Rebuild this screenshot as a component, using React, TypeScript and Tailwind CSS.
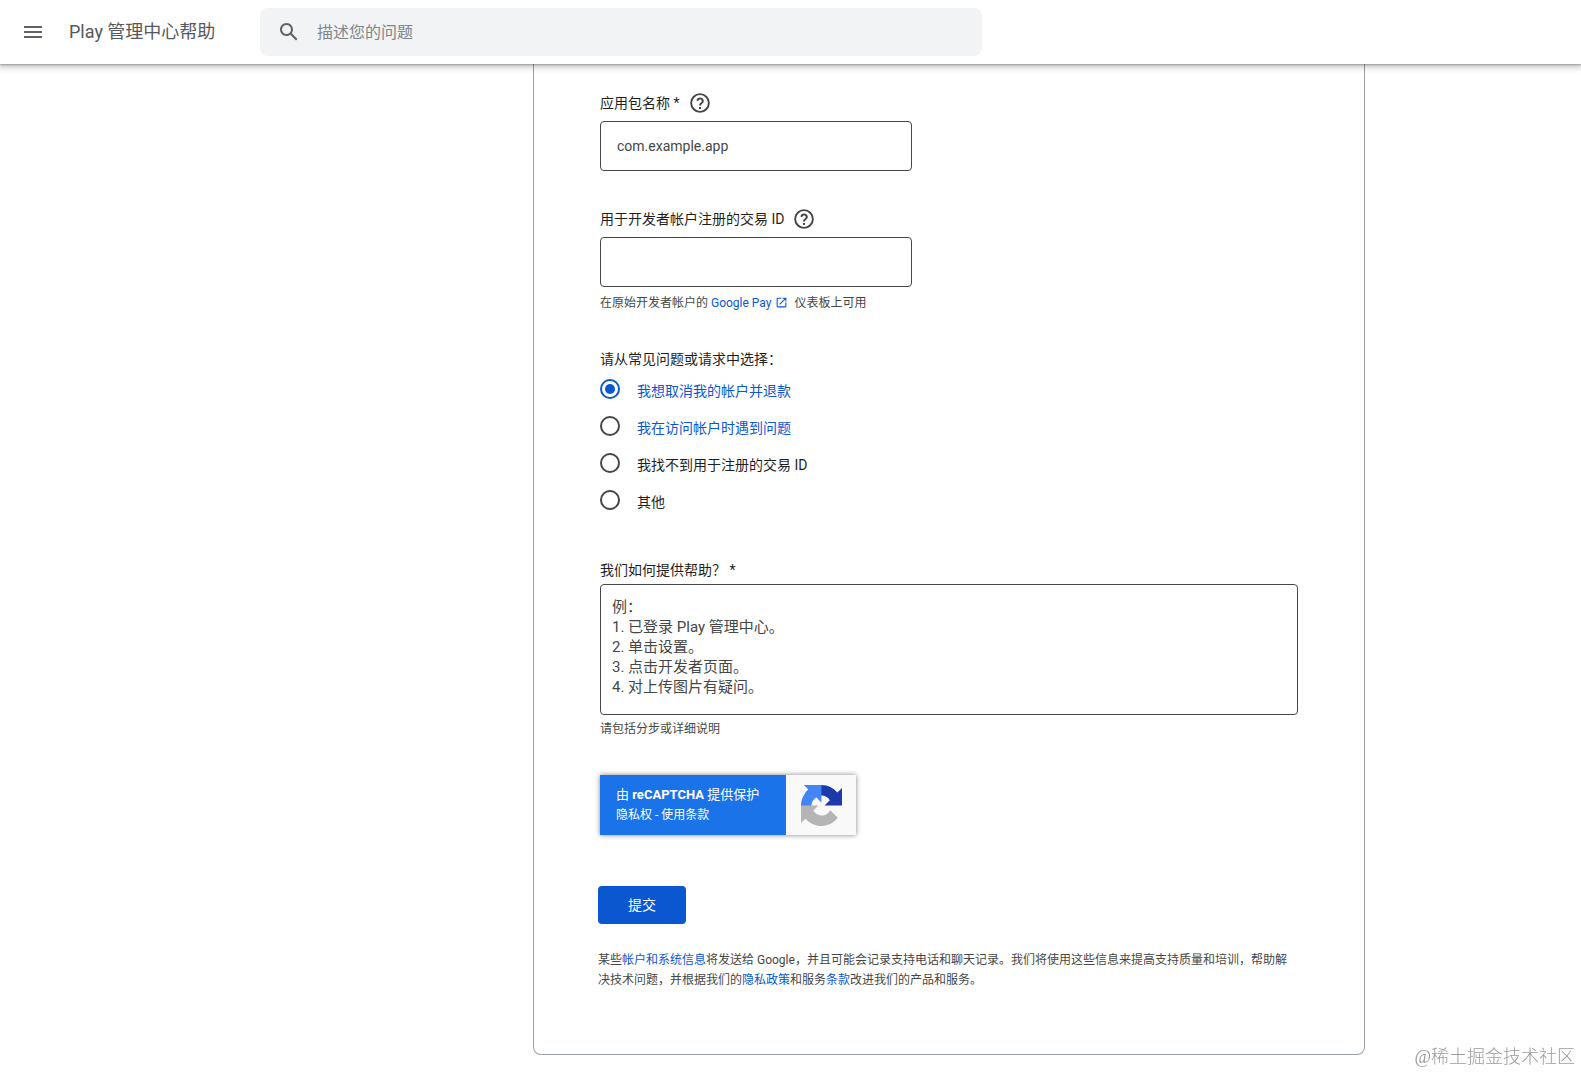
import { ReactNode } from 'react';
import clsx from 'clsx';

const issues = [
  { id: 'refund', label: '我想取消我的帐户并退款', linked: true },
  { id: 'access', label: '我在访问帐户时遇到问题', linked: true },
  { id: 'transaction', label: '我找不到用于注册的交易 ID', linked: false },
  { id: 'other', label: '其他', linked: false },
];

const example = `例：
1. 已登录 Play 管理中心。
2. 单击设置。
3. 点击开发者页面。
4. 对上传图片有疑问。`;

const inputClass =
  'block h-[50px] w-[312px] max-w-full rounded border border-[#444746] bg-white px-4 text-sm text-[#1f1f1f] placeholder-[#444746]';

function MenuIcon() {
  return (
    <svg viewBox="0 0 24 24" className="size-6 fill-[#5f6368]" aria-hidden="true">
      <path d="M3 18h18v-2H3v2zm0-5h18v-2H3v2zm0-7v2h18V6H3z" />
    </svg>
  );
}

function SearchIcon() {
  return (
    <svg viewBox="0 0 24 24" className="size-6 fill-[#5f6368]" aria-hidden="true">
      <path d="M20.49 19l-5.73-5.73C15.53 12.2 16 10.91 16 9.5 16 5.91 13.09 3 9.5 3S3 5.91 3 9.5 5.91 16 9.5 16c1.41 0 2.7-.47 3.77-1.24L19 20.49 20.49 19zM5 9.5C5 7.01 7.01 5 9.5 5S14 7.01 14 9.5 11.99 14 9.5 14 5 11.99 5 9.5z" />
    </svg>
  );
}

function HelpIcon() {
  return (
    <svg viewBox="0 0 24 24" className="size-6 fill-[#444746]" aria-hidden="true">
      <path
        fillRule="evenodd"
        d="M12 2.2a9.8 9.8 0 1 0 0 19.6 9.8 9.8 0 0 0 0-19.6zm0 17.7a7.9 7.9 0 1 1 0-15.8 7.9 7.9 0 0 1 0 15.8z"
      />
      <path d="M11 18h2v-2h-2v2zM12 6.6c-1.8 0-3.2 1.2-3.6 2.8l1.8.75C10.4 9.2 11.1 8.5 12 8.5c1 0 1.8.7 1.8 1.6 0 1.6-2.7 1.8-2.7 4.5h1.9c0-1.8 2.8-2.2 2.8-4.6 0-2-1.7-3.4-3.8-3.4z" />
    </svg>
  );
}

function ExternalIcon() {
  return (
    <svg viewBox="0 0 24 24" className="mr-[3px] ml-1 inline size-[13px] fill-current align-[-2px]" aria-hidden="true">
      <path d="M19 19H5V5h7V3H5c-1.11 0-2 .9-2 2v14c0 1.1.89 2 2 2h14c1.1 0 2-.9 2-2v-7h-2v7zM14 3v2h3.59l-9.83 9.83 1.41 1.41L19 6.41V10h2V3h-7z" />
    </svg>
  );
}

function RecaptchaLogo() {
  return (
    <svg viewBox="0 0 64 64" className="size-[41px]" aria-hidden="true">
      <path fill="#1c3aa9" d="M64 31.955l-.033-1.37V4.687l-7.16 7.16C50.948 4.674 42.033.093 32.05.093c-10.4 0-19.622 4.96-25.458 12.64l11.736 11.86a15.55 15.55 0 0 1 4.754-5.334c2.05-1.6 4.952-2.906 8.968-2.906.485 0 .86.057 1.135.163 4.976.393 9.288 3.14 11.828 7.124l-8.307 8.307L64 31.953" />
      <path fill="#4285f4" d="M31.862.094l-1.37.033H4.594l7.16 7.16C4.58 13.147 0 22.06 0 32.046c0 10.4 4.96 19.622 12.64 25.458L24.5 45.768a15.55 15.55 0 0 1-5.334-4.754c-1.6-2.05-2.906-4.952-2.906-8.968 0-.485.057-.86.163-1.135.393-4.976 3.14-9.288 7.124-11.828l8.307 8.307L31.86.095" />
      <path fill="#b5b5b5" d="M.001 32.045l.033 1.37v25.898l7.16-7.16c5.86 7.173 14.774 11.754 24.76 11.754 10.4 0 19.622-4.96 25.458-12.64l-11.736-11.86a15.55 15.55 0 0 1-4.754 5.334c-2.05 1.6-4.952 2.906-8.968 2.906-.485 0-.86-.057-1.135-.163-4.976-.393-9.288-3.14-11.828-7.124l8.307-8.307c-10.522.04-22.4.066-27.295-.005" />
    </svg>
  );
}

function Link({ children }: Readonly<{ children: ReactNode }>) {
  return (
    <a href="#" className="text-[#0b57d0] hover:underline">
      {children}
    </a>
  );
}

function Header() {
  return (
    <header className="sticky top-0 z-10 flex h-16 items-center bg-white pl-[21px] shadow-[0_1px_2px_rgba(0,0,0,0.3),0_2px_6px_2px_rgba(0,0,0,0.18)]">
      <button type="button" aria-label="主菜单">
        <MenuIcon />
      </button>
      <a href="#" className="ml-6 w-[191px] shrink-0 text-lg text-[#55585c]">
        Play 管理中心帮助
      </a>
      <form className="flex h-12 max-w-[722px] flex-1 items-center rounded-lg bg-[#f1f3f4] pl-[17px]">
        <button type="submit" aria-label="搜索">
          <SearchIcon />
        </button>
        <input
          type="search"
          aria-label="描述您的问题"
          placeholder="描述您的问题"
          className="ml-4 h-full min-w-0 flex-1 bg-transparent text-base text-[#202124] placeholder-[#80868b] outline-none"
        />
      </form>
    </header>
  );
}

function Recaptcha() {
  return (
    <div className="flex h-[60px] w-64 bg-[#f9f9f9] text-xs leading-5 text-white shadow-[0_0_5px_gray]">
      <div className="flex flex-1 flex-col justify-center bg-[#1a73e8] pl-4">
        <p className="text-[13px] leading-5">
          由 <strong className="font-bold">reCAPTCHA</strong> 提供保护
        </p>
        <p>
          <a href="#">隐私权</a> - <a href="#">使用条款</a>
        </p>
      </div>
      <div className="flex w-[70px] items-center justify-center">
        <RecaptchaLogo />
      </div>
    </div>
  );
}

export default function App() {
  return (
    <div lang="zh-CN" className="min-h-screen bg-white font-['Roboto','Noto_Sans_CJK_SC',sans-serif] text-[#1f1f1f]">
      <Header />

      <main className="pr-[216px] pb-[18px] pl-[533px]">
        <form className="rounded-b-lg border border-t-0 border-[#9aa0a6] px-[66px] pt-[27px] pb-16 text-sm">
          <div className="flex h-6 items-center gap-2">
            <label htmlFor="package">应用包名称 *</label>
            <button type="button" aria-label="应用包名称帮助">
              <HelpIcon />
            </button>
          </div>
          <input id="package" type="text" placeholder="com.example.app" className={clsx(inputClass, 'mt-[6px]')} />

          <div className="mt-9 flex h-6 items-center gap-2">
            <label htmlFor="transaction-id">用于开发者帐户注册的交易 ID</label>
            <button type="button" aria-label="交易 ID 帮助">
              <HelpIcon />
            </button>
          </div>
          <input id="transaction-id" type="text" className={clsx(inputClass, 'mt-[6px]')} />
          <p className="mt-[6px] text-xs leading-5 text-[#444746]">
            在原始开发者帐户的{' '}
            <Link>
              Google Pay
              <ExternalIcon />
            </Link>{' '}
            仪表板上可用
          </p>

          <fieldset className="mt-9">
            <legend className="leading-5">请从常见问题或请求中选择：</legend>
            <div className="mt-[10px] flex flex-col items-start gap-[17px]">
              {issues.map(({ id, label, linked }) => (
                <div key={id} className="flex h-5 items-center">
                  <input
                    id={id}
                    type="radio"
                    name="issue"
                    defaultChecked={id === 'refund'}
                    className="grid size-5 appearance-none place-items-center rounded-full border-2 border-[#444746] before:size-[10px] before:rounded-full checked:border-[#0b57d0] checked:before:bg-[#0b57d0]"
                  />
                  <label htmlFor={id} className={clsx('pt-1 pl-[17px]', linked && 'text-[#0b57d0]')}>
                    {label}
                  </label>
                </div>
              ))}
            </div>
          </fieldset>

          <label htmlFor="details" className="mt-[50px] block leading-5">
            我们如何提供帮助？ *
          </label>
          <textarea
            id="details"
            placeholder={example}
            className="mt-1 block h-[131px] w-full resize-none rounded border border-[#444746] px-[11px] py-3 text-[15px] leading-5 placeholder-[#444746]"
          />
          <p className="mt-1 text-xs leading-5 text-[#444746]">请包括分步或详细说明</p>

          <div className="mt-9">
            <Recaptcha />
          </div>

          <div className="-ml-[2px] pt-[51px]">
            <button type="submit" className="block h-[38px] w-[88px] rounded bg-[#0b57d0] text-white">
              提交
            </button>
            <p className="mt-[26px] text-xs leading-5 text-[#444746]">
              某些<Link>帐户和系统信息</Link>将发送给 Google，并且可能会记录支持电话和聊天记录。我们将使用这些信息来提高支持质量和培训，帮助解决技术问题，并根据我们的
              <Link>隐私政策</Link>和服务<Link>条款</Link>改进我们的产品和服务。
            </p>
          </div>
        </form>
      </main>

      <p className="fixed right-[6px] bottom-1 font-['Liberation_Serif','Noto_Sans_CJK_SC',serif] text-lg leading-6 font-light text-[#9a9a9a]">
        @稀土掘金技术社区
      </p>
    </div>
  );
}
